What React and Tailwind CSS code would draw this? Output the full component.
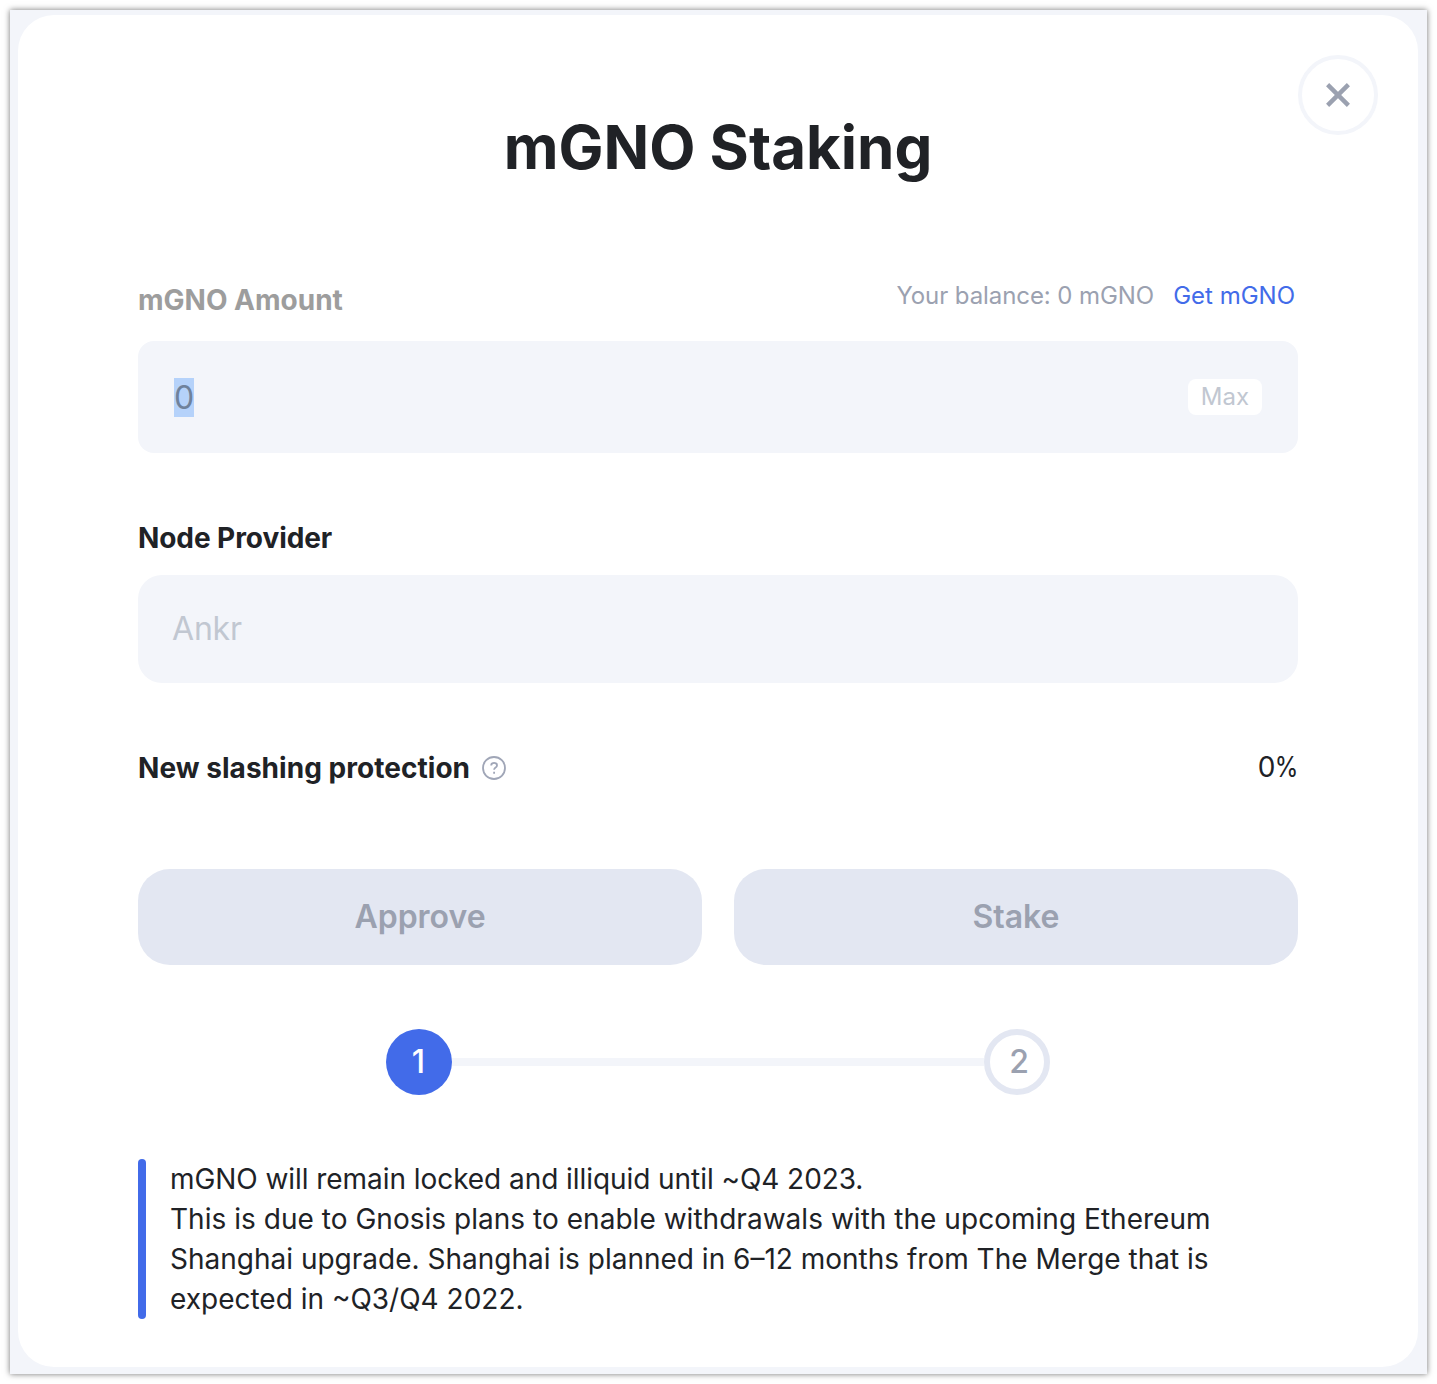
export default function App() {
  return (
    <div className="h-[1384px] w-[1437px] bg-white p-[10px] font-['Inter',sans-serif] text-[#202226]">
      <div className="h-[1364px] w-[1417px] bg-[#f3f5fa] pt-[5px] pl-[8px] shadow-[0_0_6px_rgba(0,0,0,0.55)]">
        <main className="h-[1352px] w-[1400px] rounded-[36px] bg-white px-[120px] pt-[40px]">
          <div className="-mr-[80px] flex h-[80px] justify-end">
            <button aria-label="Close" className="flex size-[80px] items-center justify-center rounded-full border-4 border-[#f3f5fa]">
              <svg width="24" height="24" viewBox="0 0 24 24" fill="none" stroke="#9ba1b0" strokeWidth="4.4"><path d="M1.6 1.6 22.4 22.4M22.4 1.6 1.6 22.4" /></svg>
            </button>
          </div>
          <h1 className="-mt-[28px] h-[80px] text-center text-[60px] leading-[80px] font-bold whitespace-nowrap">mGNO Staking</h1>
          <div className="mt-[89px] flex h-[60px] justify-between">
            <label className="mt-[4px] text-[28px] leading-[40px] font-bold whitespace-nowrap text-[#9d9d9d]">mGNO Amount</label>
            <div className="mr-[3px] flex gap-[19px] text-[24px] leading-[40px] whitespace-nowrap text-[#9ba1b0]">
              <span className="tracking-[-0.08px]">Your balance: 0 mGNO</span><a className="text-[#426be9]">Get mGNO</a>
            </div>
          </div>
          <div className="mt-[5px] flex h-[112px] items-center justify-between rounded-[16px] bg-[#f3f5fa] px-[36px]">
            <span className="h-[39px] w-[20px] bg-[#b5d2fa] text-[32px] leading-[39px] text-[#6f829c]">0</span>
            <button className="h-[36px] w-[74px] rounded-[8px] bg-white text-[24px] leading-[36px] text-[#c1c7d1]">Max</button>
          </div>
          <h2 className="mt-[65px] h-[40px] text-[28px] leading-[40px] font-bold tracking-[-0.07px]">Node Provider</h2>
          <div className="mt-[17px] h-[108px] rounded-[24px] bg-[#f3f5fa] pl-[34px] text-[32px] leading-[108px] tracking-[-0.2px] text-[#c1c7d1]">Ankr</div>
          <div className="mt-[65px] flex h-[40px] items-center">
            <h2 className="text-[28px] leading-[40px] font-bold tracking-[0.04px] whitespace-nowrap">New slashing protection</h2>
            <svg className="ml-[12px]" width="24" height="24" viewBox="0 0 24 24" fill="none" stroke="#a0a6b7" strokeWidth="1.8"><circle cx="12" cy="12" r="11" /><path d="M9.2 9.5c0-1.7 1.2-2.7 2.9-2.7s2.9 1 2.9 2.6c0 2.2-2.9 2.1-2.9 4.3" /><path d="M12.1 15.7v2.1" /></svg>
            <span className="-mt-[2px] ml-auto flex text-[28px] leading-[38px]"><span>0</span><span className="-ml-[5px] inline-block origin-right scale-x-[0.86]">%</span></span>
          </div>
          <div className="mt-[81px] flex h-[96px] gap-[32px] text-[32px] font-semibold text-[#9ba1b0]">
            <button className="flex-1 rounded-[32px] bg-[#e3e7f2]">Approve</button>
            <button className="flex-1 rounded-[32px] bg-[#e3e7f2]">Stake</button>
          </div>
          <div className="mx-auto mt-[64px] flex h-[66px] w-[664px] items-center text-[32px] font-medium">
            <span className="flex size-[66px] items-center justify-center rounded-full bg-[#426be9] pr-px text-white">1</span>
            <div className="h-[8px] flex-1 bg-[#f3f5fa]" />
            <span className="flex size-[66px] items-center justify-center rounded-full border-[6px] border-[#e3e7f2] pl-[4px] text-[#9ba1b0]">2</span>
          </div>
          <div className="mt-[64px] flex h-[160px] gap-[24px]">
            <div className="w-[8px] rounded-full bg-[#426be9]" />
            <p className="text-[28px] leading-[40px] whitespace-nowrap"><span className="tracking-[-0.06px]">mGNO will remain locked and illiquid until ~Q4 2023.</span><br /><span className="tracking-[0.03px]">This is due to Gnosis plans to enable withdrawals with the upcoming Ethereum</span><br />Shanghai upgrade. Shanghai is planned in 6–12 months from The Merge that is<br />expected in ~Q3/Q4 2022.</p>
          </div>
        </main>
      </div>
    </div>
  );
}
